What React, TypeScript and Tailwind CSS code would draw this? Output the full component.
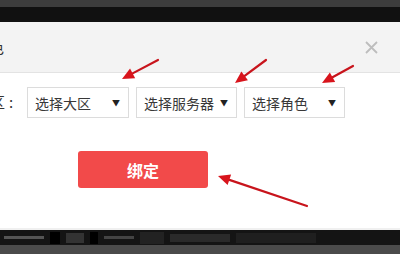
import React from "react";

const SelectBox: React.FC<{ label: string; width: string }> = ({ label, width }) => {
  return (
    <div
      className={`${width} h-[31px] border border-[#dcdcdc] bg-white flex items-center justify-between pl-[7px] pr-[8px] text-[14px] text-[#383838] whitespace-nowrap`}
    >
      <span className="leading-none">{label}</span>
      <span className="text-[8px] text-[#222] leading-none">▼</span>
    </div>
  );
};

const Arrow: React.FC<{ x1: number; y1: number; x2: number; y2: number }> = ({ x1, y1, x2, y2 }) => {
  const a = Math.atan2(y2 - y1, x2 - x1);
  const len = 12;
  const w = 5.5;
  const bx = x2 - Math.cos(a) * len;
  const by = y2 - Math.sin(a) * len;
  const px = -Math.sin(a) * w;
  const py = Math.cos(a) * w;
  return (
    <g>
      <line x1={x1} y1={y1} x2={bx} y2={by} stroke="#c8141c" strokeWidth="2.2" strokeLinecap="round" />
      <polygon points={`${x2},${y2} ${bx + px},${by + py} ${bx - px},${by - py}`} fill="#d8141c" />
    </g>
  );
};

const App: React.FC = () => {
  return (
    <div
      className="relative w-[400px] h-[254px] overflow-hidden bg-[#4a4a4a] flex flex-col"
      style={{ fontFamily: '"Noto Sans CJK SC", "Noto Sans", sans-serif' }}
    >
      <div className="h-[7px] bg-[#3d3d3d] shrink-0" />
      <div className="h-[15px] bg-[#111] shrink-0" />

      {/* dialog */}
      <div className="shrink-0 flex flex-col">
        <div className="h-[51px] bg-[#f3f3f3] border-b border-[#e3e3e3] flex items-center justify-between pr-[22px]">
          <span className="ml-[-56px] text-[15px] text-[#333] whitespace-nowrap">绑定角色</span>
          <svg width="13" height="13" viewBox="0 0 13 13">
            <path d="M1 1 L12 12 M12 1 L1 12" stroke="#bdbdbd" strokeWidth="1.8" />
          </svg>
        </div>
        <div className="h-[155px] bg-white flex flex-col">
          <div className="flex items-center mt-[14px]">
            <span className="ml-[-40px] text-[15px] text-[#333] whitespace-nowrap">所在区</span>
            <span className="ml-[4px] w-[18px] text-[15px] text-[#333]">:</span>
            <div className="flex gap-[7px]">
              <SelectBox label="选择大区" width="w-[102px]" />
              <SelectBox label="选择服务器" width="w-[101px]" />
              <SelectBox label="选择角色" width="w-[101px]" />
            </div>
          </div>
          <div className="mt-[33px] ml-[78px] w-[130px] h-[37px] rounded-[3px] bg-[#f24a4a] flex items-center justify-center text-white text-[16px] font-bold">
            绑定
          </div>
        </div>
      </div>

      <div className="h-[2px] bg-[#f0f0f0] shrink-0" />
      <div className="h-[15px] bg-[#141414] shrink-0 flex items-center gap-[6px] px-[4px] overflow-hidden">
        <div className="w-[40px] h-[3px] bg-[#555]" />
        <div className="w-[10px] h-[12px] bg-[#000]" />
        <div className="w-[18px] h-[10px] bg-[#333]" />
        <div className="w-[8px] h-[12px] bg-[#000]" />
        <div className="w-[30px] h-[3px] bg-[#444]" />
        <div className="w-[24px] h-[12px] bg-[#222]" />
        <div className="w-[60px] h-[8px] bg-[#2a2a2a]" />
        <div className="w-[80px] h-[10px] bg-[#1f1f1f]" />
      </div>
      <div className="flex-1 bg-[#4b4b4b]" />

      <svg className="absolute inset-0 pointer-events-none" width="400" height="254">
        <Arrow x1={158} y1={60} x2={122} y2={79} />
        <Arrow x1={266} y1={60} x2={235} y2={83} />
        <Arrow x1={353} y1={66} x2={322} y2={83} />
        <Arrow x1={307} y1={206} x2={218} y2={176} />
      </svg>
    </div>
  );
};

export default App;
